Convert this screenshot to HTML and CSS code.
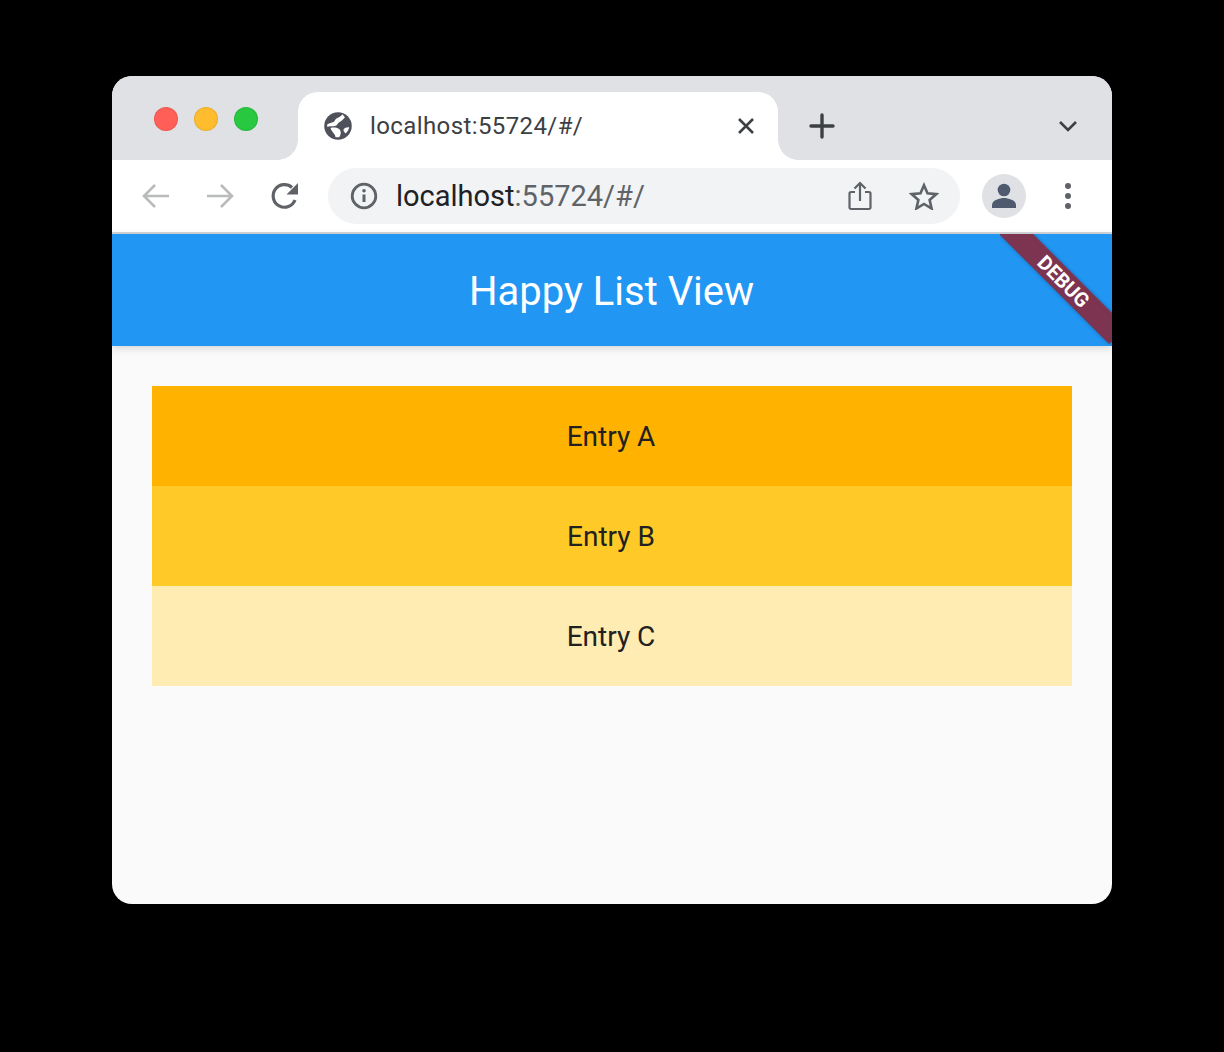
FILE: index.html
```html
<!DOCTYPE html>
<html lang="en">
<head>
<meta charset="utf-8">
<title>Happy List View</title>
<link rel="stylesheet" href="styles.css">
</head>
<body>
<div class="window">
  <div class="tabstrip">
    <div class="lights">
      <span class="light red"></span>
      <span class="light yellow"></span>
      <span class="light green"></span>
    </div>
    <div class="tab">
      <svg class="globe" width="30" height="30" viewBox="0 0 24 24"><circle cx="12" cy="12" r="11" fill="#4e5159"/><path fill="#fff" d="M15.500 2.600C13.500 5.500 11 5 9.500 7.500 8.500 9.500 6 9 3.500 10.500l-.3 2C7 11.500 10 13 11.500 10.500 13 8.500 15.500 8 17.500 5zM6 13.500c2-.5 6-.5 7.500 1.500 1.500 2 .5 4-.5 6h-3c0-3-3-4-4-7.500zM21 13c-3 0-5 1-4.500 3l1.500 2c1.500-1 2.500-3 3-5z"/></svg>
      <span class="tab-title">localhost:55724/#/</span>
      <svg class="tab-close" width="20" height="20" viewBox="0 0 20 20"><path d="M3 3l14 14M17 3L3 17" stroke="#3c4043" stroke-width="2.600" fill="none"/></svg>
    </div>
    <svg class="new-tab" width="26" height="26" viewBox="0 0 26 26"><path d="M13 2v22M2 13h22" stroke="#3c4043" stroke-width="3.400" stroke-linecap="round" fill="none"/></svg>
    <svg class="tab-menu" width="20" height="12" viewBox="0 0 20 12"><path d="M2 2l8 8 8-8" stroke="#3c4043" stroke-width="2.600" fill="none"/></svg>
  </div>

  <div class="toolbar">
    <svg class="nav back" width="30" height="26" viewBox="0 0 30 26"><path d="M28 13H3M14 2L3 13l11 11" stroke="#b9babc" stroke-width="2.600" fill="none"/></svg>
    <svg class="nav forward" width="30" height="26" viewBox="0 0 30 26"><path d="M2 13h25M16 2l11 11-11 11" stroke="#b9babc" stroke-width="2.600" fill="none"/></svg>
    <svg class="nav reload" width="30" height="30" viewBox="0 0 30 30"><path d="M25 19A11.300 11.300 0 1 1 22 6.500" stroke="#5f6368" stroke-width="3.200" fill="none"/><path d="M28 2v11.500H16.500z" fill="#5f6368"/></svg>
    <div class="omnibox">
      <svg class="info" width="28" height="28" viewBox="0 0 28 28"><circle cx="14" cy="14" r="11.800" stroke="#5f6368" stroke-width="2.800" fill="none"/><path d="M14 12.500v7.500" stroke="#5f6368" stroke-width="3"/><circle cx="14" cy="8.800" r="1.800" fill="#5f6368"/></svg>
      <span class="url"><span class="url-host">localhost</span>:55724/#/</span>
      <svg class="share" width="24" height="30" viewBox="0 0 24 30"><path d="M7 11H3a1.500 1.500 0 0 0-1.500 1.500v14A1.500 1.500 0 0 0 3 28h18a1.500 1.500 0 0 0 1.500-1.500v-14A1.500 1.500 0 0 0 21 11h-4" stroke="#5f6368" stroke-width="2.200" fill="none"/><path d="M12 20V2.500M6.500 7.500L12 2l5.500 5.500" stroke="#5f6368" stroke-width="2.200" fill="none"/></svg>
      <svg class="star" width="30" height="28" viewBox="0 0 30 28"><path d="M15 3.200l3.500 8.100 8.800.8-6.700 5.800 2 8.600L15 21.900l-7.600 4.600 2-8.600-6.700-5.800 8.800-.8z" stroke="#5f6368" stroke-width="2.600" stroke-linejoin="miter" fill="none"/></svg>
    </div>
    <div class="avatar">
      <svg width="26" height="26" viewBox="0 0 26 26"><circle cx="13" cy="7" r="6.300" fill="#4f5a6e"/><path d="M1 25v-3c0-5 8-7 12-7s12 2 12 7v3z" fill="#4f5a6e"/></svg>
    </div>
    <div class="kebab"><span></span><span></span><span></span></div>
  </div>

  <div class="app">
    <header class="appbar">
      <h1 class="app-title">Happy List View</h1>
      <div class="debug-clip"><div class="debug-ribbon">DEBUG</div></div>
    </header>
    <main class="list">
      <div class="entry entry-a">Entry A</div>
      <div class="entry entry-b">Entry B</div>
      <div class="entry entry-c">Entry C</div>
    </main>
  </div>
</div>
</body>
</html>
```

FILE: styles.css
```css
* { box-sizing: border-box; }

html, body { margin: 0; height: 100%; }

body {
  background: #000;
  padding: 76px 112px 148px;
  font-family: Roboto, "Liberation Sans", sans-serif;
}

.window {
  width: 1000px;
  height: 828px;
  border-radius: 20px;
  overflow: hidden;
  display: flex;
  flex-direction: column;
  background: #fafafa;
}

.tabstrip {
  height: 84px;
  flex: none;
  background: #dfe1e5;
  display: flex;
  align-items: flex-end;
}

.lights {
  width: 186px;
  height: 84px;
  display: flex;
  gap: 16px;
  padding: 31px 0 0 42px;
  flex: none;
}

.light {
  width: 24px;
  height: 24px;
  border-radius: 50%;
  border: 1px solid rgba(0, 0, 0, 0.08);
}
.red { background: #ff5f57; }
.yellow { background: #febc2e; }
.green { background: #28c840; }

.tab {
  width: 480px;
  height: 68px;
  flex: none;
  background: #fff;
  border-radius: 20px 20px 0 0;
  display: flex;
  align-items: center;
  padding: 0 22px 0 25px;
  position: relative;
}

.tab::before,
.tab::after {
  content: "";
  position: absolute;
  bottom: 0;
  width: 20px;
  height: 20px;
}
.tab::before {
  left: -20px;
  background: radial-gradient(circle at 0 0, transparent 19.500px, #fff 20px);
}
.tab::after {
  right: -20px;
  background: radial-gradient(circle at 100% 0, transparent 19.500px, #fff 20px);
}

.globe { flex: none; margin-right: 17px; }

.tab-title {
  flex: 1;
  font-size: 24px;
  letter-spacing: 0.4px;
  color: #3c4043;
  white-space: nowrap;
}

.tab-close { flex: none; }

.new-tab { margin: 0 0 21px 31px; flex: none; }

.tab-menu { margin: 0 0 28px 223px; flex: none; }

.toolbar {
  height: 74px;
  flex: none;
  background: #fff;
  border-bottom: 2px solid #d5d6d9;
  display: flex;
  align-items: center;
}

.nav { flex: none; }
.back { margin-left: 29px; }
.forward { margin-left: 34px; }
.reload { margin-left: 35px; }

.omnibox {
  width: 632px;
  height: 56px;
  margin-left: 28px;
  flex: none;
  background: #f1f3f4;
  border-radius: 28px;
  display: flex;
  align-items: center;
  padding-left: 22px;
}

.info { flex: none; margin-right: 18px; }

.url {
  flex: 1;
  font-size: 29px;
  color: #5f6368;
  white-space: nowrap;
}
.url-host { color: #202124; }

.share { flex: none; margin-right: 37px; }
.star { flex: none; margin-right: 21px; }

.avatar {
  width: 44px;
  height: 44px;
  margin-left: 22px;
  flex: none;
  border-radius: 50%;
  background: #dfe1e5;
  display: flex;
  align-items: center;
  justify-content: center;
}

.kebab {
  margin-left: 20px;
  flex: none;
  width: 44px;
  display: flex;
  flex-direction: column;
  align-items: center;
  gap: 4px;
}
.kebab span {
  width: 6px;
  height: 6px;
  border-radius: 50%;
  background: #5f6368;
}

.app {
  flex: 1;
  display: flex;
  flex-direction: column;
  min-height: 0;
}

.appbar {
  height: 112px;
  flex: none;
  background: #2196f3;
  position: relative;
  display: flex;
  align-items: center;
  justify-content: center;
  padding: 3px 1px 0 0;
  box-shadow: 0 2px 8px rgba(0, 0, 0, 0.16);
  z-index: 1;
}

.app-title {
  margin: 0;
  font-size: 40px;
  font-weight: 400;
  color: #fff;
  line-height: 1;
  white-space: nowrap;
}

.debug-clip {
  position: absolute;
  top: 0;
  right: 0;
  width: 112px;
  height: 112px;
  overflow: hidden;
}

.debug-ribbon {
  position: absolute;
  left: -19px;
  top: 33px;
  width: 160px;
  height: 24px;
  padding-left: 7px;
  background: #7c3450;
  color: #fff;
  font-size: 20px;
  font-weight: 700;
  line-height: 24px;
  text-align: center;
  transform: rotate(45deg);
  box-shadow: 0 0 4px rgba(0, 0, 0, 0.3);
}

.list {
  padding: 40px;
  display: flex;
  flex-direction: column;
}

.entry {
  height: 100px;
  display: flex;
  align-items: center;
  justify-content: center;
  padding-right: 2px;
  font-size: 28px;
  color: #212121;
}
.entry-a { background: #ffb300; }
.entry-b { background: #ffca28; }
.entry-c { background: #ffecb3; }
```
